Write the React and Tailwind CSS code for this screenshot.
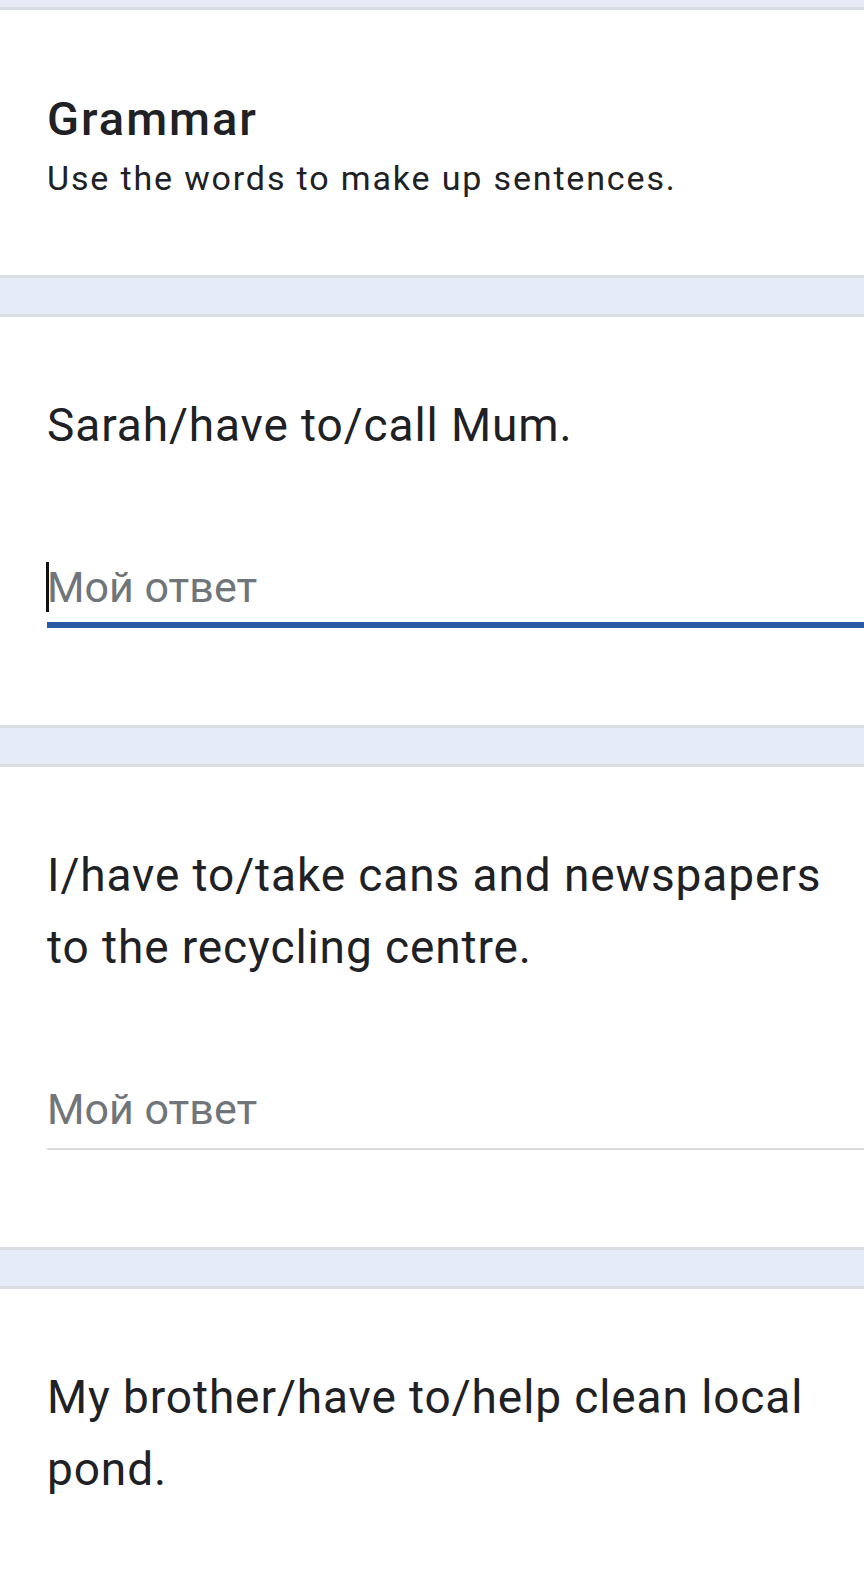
import React from 'react';

const questions = [
  { id: 'q1', text: 'Sarah/have to/call Mum.', focused: true },
  { id: 'q2', text: 'I/have to/take cans and newspapers to the recycling centre.' },
];

const Band = ({ top }) => (
  <div
    className={
      top
        ? 'h-[10px] bg-[#e5ecf7] border-b-[3px] border-[#d9dce1]'
        : 'h-[42px] bg-[#e5ecf7] border-y-[3px] border-[#d9dce1]'
    }
  />
);

const AnswerField = ({ focused }) => (
  <div
    className={`relative mt-[101px] ${
      focused ? 'pb-[10px] border-b-[6px] border-[#2a5aa6]' : 'pb-[14px] border-b-[2px] border-[#dcdcdc]'
    }`}
  >
    {focused && <span className="absolute left-[-1px] top-0 w-[3px] h-[50px] bg-[#111]" />}
    <input
      type="text"
      placeholder="Мой ответ"
      className="block w-full h-[50px] bg-transparent outline-none text-[43px] leading-[50px] text-[#202124] placeholder:text-[#70757a]"
    />
  </div>
);

const QuestionCard = ({ text, focused }) => (
  <div className="bg-white pl-[47px] pt-[72px] pb-[97px]">
    <p className="pr-[20px] text-[46px] leading-[72px] tracking-[0.9px] text-[#202124]">{text}</p>
    <AnswerField focused={focused} />
  </div>
);

export default function App() {
  return (
    <div className="w-[864px] h-[1577px] overflow-hidden bg-white font-['Roboto',_'Liberation_Sans',_sans-serif]">
      <Band top />

      {/* Section header */}
      <div className="bg-white pl-[47px] pt-[81px] pb-[75px]">
        <h1 className="text-[47px] leading-[56px] font-medium tracking-[2px] text-[#202124]">Grammar</h1>
        <p className="mt-[9px] text-[34px] leading-[44px] tracking-[1.85px] text-[#202124]">
          Use the words to make up sentences.
        </p>
      </div>

      {questions.map((q) => (
        <React.Fragment key={q.id}>
          <Band />
          <QuestionCard text={q.text} focused={q.focused} />
        </React.Fragment>
      ))}

      <Band />
      <div className="bg-white pl-[47px] pt-[72px]">
        <p className="pr-[20px] text-[46px] leading-[72px] tracking-[0.9px] text-[#202124]">
          My brother/have to/help clean local pond.
        </p>
      </div>
    </div>
  );
}
